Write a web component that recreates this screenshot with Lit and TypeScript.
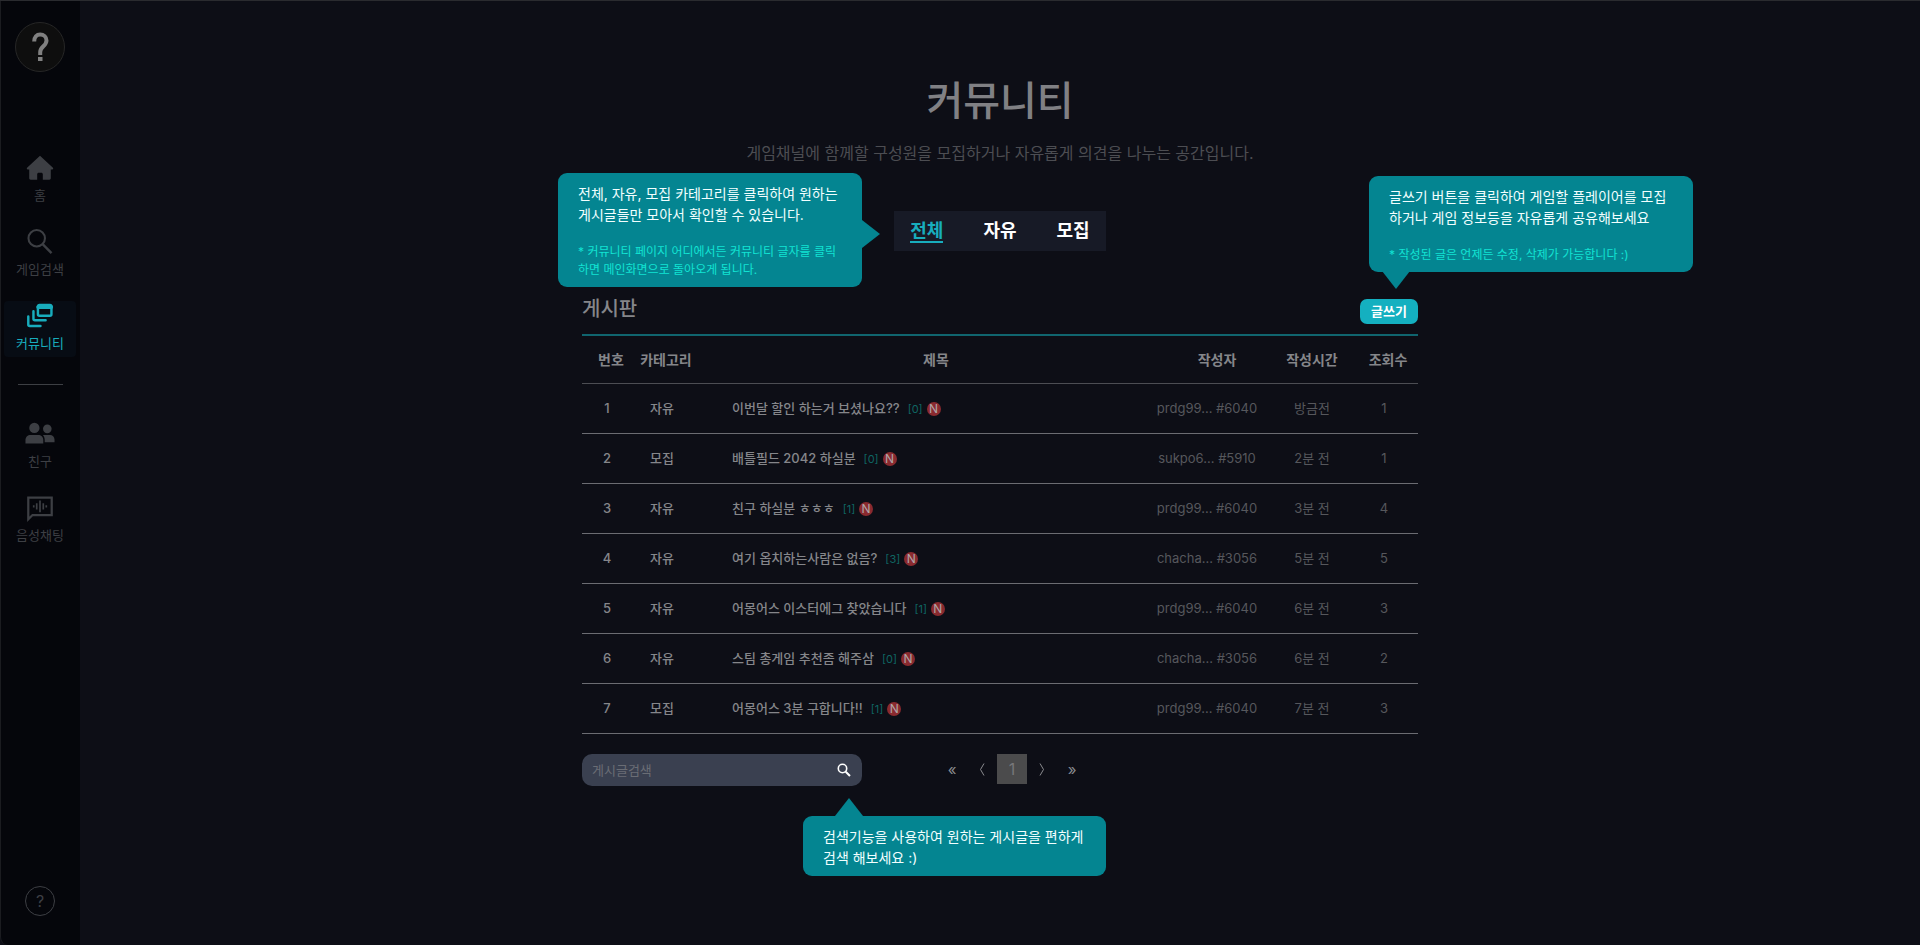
import { LitElement, html, css, svg } from "lit";
import { customElement, state } from "lit/decorators.js";

interface Post {
  no: number;
  category: string;
  title: string;
  replies: number;
  author: string;
  time: string;
  views: number;
}

const POSTS: Post[] = [
  { no: 1, category: "자유", title: "이번달 할인 하는거 보셨나요??", replies: 0, author: "prdg99... #6040", time: "방금전", views: 1 },
  { no: 2, category: "모집", title: "배틀필드 2042 하실분", replies: 0, author: "sukpo6... #5910", time: "2분 전", views: 1 },
  { no: 3, category: "자유", title: "친구 하실분 ㅎㅎㅎ", replies: 1, author: "prdg99... #6040", time: "3분 전", views: 4 },
  { no: 4, category: "자유", title: "여기 옵치하는사람은 없음?", replies: 3, author: "chacha... #3056", time: "5분 전", views: 5 },
  { no: 5, category: "자유", title: "어몽어스 이스터에그 찾았습니다", replies: 1, author: "prdg99... #6040", time: "6분 전", views: 3 },
  { no: 6, category: "자유", title: "스팀 총게임 추천좀 해주삼", replies: 0, author: "chacha... #3056", time: "6분 전", views: 2 },
  { no: 7, category: "모집", title: "어몽어스 3분 구합니다!!", replies: 1, author: "prdg99... #6040", time: "7분 전", views: 3 },
];

const ICONS = {
  home: svg`<path fill="currentColor" d="M16 3 29.800 15.800c.6.6.2 1.800-.7 1.800H27.500V27c0 .9-.6 1.500-1.500 1.500H19v-5.800c0-.9-.7-1.600-1.600-1.600h-2.800c-.9 0-1.600.7-1.600 1.600v5.800H6C5.100 28.500 4.500 27.900 4.500 27v-9.400H2.900c-.9 0-1.300-1.200-.7-1.800z"/>`,
  search: svg`<g fill="none" stroke="currentColor" stroke-width="2.200"><circle cx="12.500" cy="12" r="8.800"/><path d="M18.800 18.300 28.300 27.800" stroke-width="2.600"/></g>`,
  community: svg`<g fill="none" stroke="currentColor" stroke-width="2.600" stroke-linejoin="round" stroke-linecap="round"><rect x="13.800" y="4.300" width="14.400" height="11.400" rx="1.600"/><path d="M14 6.400h14" stroke-width="4"/><path d="M9 11v8c0 1 .6 1.600 1.600 1.600h11.400"/><path d="M3.500 16.500v8.500c0 1 .6 1.600 1.600 1.600h11.400"/></g>`,
  friends: svg`<g fill="currentColor"><circle cx="10" cy="9.500" r="5.500"/><path d="M.5 26v-3.500C.5 19 3.100 17 5.700 17h8.600c2.600 0 5.200 1.800 5.200 5.500V26z"/><circle cx="23.800" cy="10.500" r="4.600"/><path d="M21 24.800v-2.600c0-1.900-.7-3.700-1.900-5.200h7.700c2.400 0 4.700 1.700 4.700 5v2.800z"/></g>`,
  voice: svg`<g fill="none" stroke="currentColor" stroke-width="2"><path d="M3.500 28V5h25v18.500H8z" stroke-width="2.400"/><path d="M16 8v12.500M12.500 11v6.500M19.500 11v6.500M9.300 13v2.500M22.700 13v2.500" stroke-width="1.800"/></g>`,
};

@customElement("side-nav")
class SideNav extends LitElement {
  static styles = css`
    :host {
      display: flex;
      flex-direction: column;
      align-items: center;
      box-sizing: border-box;
      padding: 21px 4px 29px 3px;
      border-left: 1px solid #1b1c20;
      border-bottom-left-radius: 8px;
      background: #05060b;
    }
    .logo {
      box-sizing: border-box;
      width: 50px;
      height: 50px;
      border: 1px solid #262626;
      border-radius: 50%;
      background: #0e0e0e;
      color: #808080;
    }
    .logo svg {
      display: block;
      width: 48px;
      height: 48px;
    }
    nav {
      display: flex;
      flex-direction: column;
      align-items: center;
      gap: 18px;
      align-self: stretch;
      margin-top: 81px;
    }
    .item {
      display: flex;
      flex-direction: column;
      align-items: center;
      box-sizing: border-box;
      align-self: stretch;
      height: 56px;
      color: #3d3f44;
      font-size: 13px;
      line-height: 20px;
      text-decoration: none;
      border-radius: 4px;
    }
    .item svg {
      width: 30px;
      height: 30px;
      margin-bottom: 2px;
    }
    .active {
      background: #070c14;
      color: #18adbd;
    }
    .line {
      width: 45px;
      height: 1px;
      margin: 9px 0 16px;
      border: 0;
      background: #3d3f44;
    }
    .help {
      width: 30px;
      height: 30px;
      margin-top: auto;
      padding: 0;
      border: 1px solid #3d3f44;
      border-radius: 50%;
      background: none;
      color: #3d3f44;
      font: inherit;
      font-size: 16px;
    }
  `;

  private item(icon: unknown, label: string, active = false) {
    return html`<a class="item ${active ? "active" : ""}" href="#">
      <svg viewBox="0 0 32 32" aria-hidden="true">${icon}</svg>${label}
    </a>`;
  }

  render() {
    return html`
      <div class="logo">
        <svg viewBox="0 0 48 48" aria-hidden="true">
          <path d="M18.200 18.500c0-4.500 2.500-7 6-7s6.300 2.500 6.300 6c0 5.500-6.300 6-6.300 11.500v3" fill="none" stroke="currentColor" stroke-width="4" />
          <rect x="22" y="34" width="4.500" height="4" fill="currentColor" />
        </svg>
      </div>
      <nav>
        ${this.item(ICONS.home, "홈")} ${this.item(ICONS.search, "게임검색")}
        ${this.item(ICONS.community, "커뮤니티", true)}
        <hr class="line" />
        ${this.item(ICONS.friends, "친구")} ${this.item(ICONS.voice, "음성채팅")}
      </nav>
      <button class="help" aria-label="도움말">?</button>
    `;
  }
}

@customElement("guide-bubble")
class GuideBubble extends LitElement {
  static styles = css`
    :host {
      position: absolute;
      box-sizing: border-box;
      padding: 10px 0 8px 20px;
      border-radius: 9px;
      background: #048591;
      color: #f2ffff;
      font-size: 14px;
      line-height: 21px;
      white-space: nowrap;
    }
    ::slotted(p) {
      margin: 0;
    }
    ::slotted(.note) {
      margin-top: 18px !important;
      color: #12e3d3;
      font-size: 12px;
      line-height: 18px;
    }
  `;

  render() {
    return html`<slot></slot>`;
  }
}

@customElement("app-root")
class AppRoot extends LitElement {
  @state() private category = "전체";

  static styles = css`
    :host {
      display: grid;
      grid-template-columns: 80px 1fr;
      box-sizing: border-box;
      min-height: 100vh;
      border-top: 1px solid #2a2b2f;
      overflow: hidden;
      background: #0d0e16;
      color: #85868a;
      font-family: Inter, "Noto Sans CJK KR", sans-serif;
      font-size: 13px;
    }
    main {
      width: 836px;
      max-width: 100%;
      margin: 0 auto;
      padding-top: 70px;
    }
    .intro {
      text-align: center;
    }
    h1 {
      margin: 0;
      color: #808084;
      font-size: 40px;
      font-weight: 500;
      line-height: 60px;
    }
    .intro p {
      margin: 10px 0 0;
      color: #4c4d52;
      font-size: 16px;
      line-height: 24px;
    }
    .anchor {
      position: relative;
    }
    .tabs {
      display: flex;
      gap: 40px;
      width: max-content;
      margin: 46px auto 0;
      padding: 0 16px;
      background: #171a26;
    }
    .tab {
      height: 40px;
      padding: 0;
      border: 0;
      background: none;
      color: #ffffff;
      font: inherit;
      font-size: 18px;
      font-weight: 700;
      line-height: 20px;
    }
    .tab span {
      display: block;
      padding-top: 2px;
      border-bottom: 2px solid transparent;
    }
    .tab.on span {
      border-color: #18adbd;
      color: #18adbd;
    }
    .bar {
      display: flex;
      justify-content: space-between;
      align-items: center;
      margin-top: 43px;
      padding-bottom: 6px;
      border-bottom: 2px solid #10656f;
    }
    h2 {
      margin: 0;
      padding-bottom: 4px;
      font-size: 20px;
      font-weight: 500;
      line-height: 30px;
    }
    .write {
      height: 25px;
      padding: 0 11px;
      border: 0;
      border-radius: 7px;
      background: #14b0c0;
      color: #ffffff;
      font: inherit;
      font-weight: 700;
      line-height: 22px;
    }
    table {
      width: 100%;
      border-collapse: separate;
      border-spacing: 0;
      table-layout: fixed;
    }
    th,
    td {
      box-sizing: border-box;
      height: 50px;
      padding: 0 0 2px;
      border-bottom: 1px solid #6b6c72;
      text-align: center;
    }
    th {
      height: 48px;
      border-color: #4c4d53;
      font-size: 14px;
      font-weight: 700;
    }
    .c-no { width: 50px; }
    .c-cat { width: 60px; }
    .c-author { width: 134px; }
    .c-time { width: 76px; }
    .c-views { width: 68px; }
    .shift { padding-left: 8px; }
    .shift-wide { padding-left: 20px; }
    .num,
    .cat {
      font-weight: 500;
    }
    .subject {
      padding-left: 40px;
    }
    td.subject {
      text-align: left;
      font-weight: 500;
    }
    .post {
      display: flex;
      align-items: center;
    }
    .post a {
      color: inherit;
      text-decoration: none;
    }
    .replies {
      margin: 2px 4px 0 8px;
      color: #0f6562;
      font-size: 11px;
      font-weight: 400;
    }
    .new {
      width: 14px;
      height: 14px;
      margin-top: 2px;
      border-radius: 50%;
      background: #8a2a2f;
      color: #b0a6a8;
      font-size: 12px;
      font-weight: 400;
      line-height: 14px;
      text-align: center;
    }
    .dim {
      color: #56575c;
    }
    .foot {
      display: flex;
      gap: 75px;
      margin-top: 20px;
    }
    .search {
      display: flex;
      align-items: center;
      box-sizing: border-box;
      width: 280px;
      height: 32px;
      padding: 0 10px;
      border-radius: 10px;
      background: #3a4050;
    }
    .search input {
      flex: 1;
      min-width: 0;
      padding: 0;
      border: 0;
      outline: 0;
      background: none;
      color: #ffffff;
      font: inherit;
    }
    .search input::placeholder {
      color: #6a6d75;
      opacity: 1;
    }
    .go {
      display: flex;
      padding: 0;
      border: 0;
      background: none;
      color: #ffffff;
    }
    .go svg {
      width: 16px;
      height: 16px;
    }
    .pages {
      display: flex;
    }
    .page {
      width: 30px;
      height: 30px;
      padding: 0;
      border: 0;
      background: none;
      color: #8a8b8f;
      font: inherit;
      font-size: 15px;
    }
    .page svg {
      display: block;
      width: 30px;
      height: 30px;
      fill: none;
      stroke: currentColor;
    }
    .page.on {
      background: #4b4b4c;
      color: #77777a;
      font-size: 16px;
    }
    .tip {
      position: absolute;
      background: #048591;
    }
    .b-tabs { right: 556px; top: -38px; width: 304px; }
    .t-tabs {
      right: 538px;
      top: 9px;
      width: 18px;
      height: 28px;
      clip-path: polygon(0 0, 100% 50%, 0 100%);
    }
    .b-write { left: 787px; bottom: 62px; width: 324px; }
    .t-write {
      left: 800px;
      bottom: 45px;
      width: 28px;
      height: 18px;
      clip-path: polygon(0 0, 100% 0, 50% 100%);
    }
    .b-search { left: 221px; top: 62px; width: 303px; }
    .t-search {
      left: 253px;
      top: 44px;
      width: 28px;
      height: 18px;
      clip-path: polygon(50% 0, 100% 100%, 0 100%);
    }
  `;

  private row(p: Post) {
    return html`<tr>
      <td class="num">${p.no}</td>
      <td class="cat">${p.category}</td>
      <td class="subject">
        <div class="post">
          <a href="#">${p.title}</a>
          <span class="replies">[${p.replies}]</span>
          <span class="new">N</span>
        </div>
      </td>
      <td class="dim">${p.author}</td>
      <td class="dim">${p.time}</td>
      <td class="dim">${p.views}</td>
    </tr>`;
  }

  render() {
    return html`
      <side-nav></side-nav>
      <main>
        <header class="intro">
          <h1>커뮤니티</h1>
          <p>게임채널에 함께할 구성원을 모집하거나 자유롭게 의견을 나누는 공간입니다.</p>
        </header>

        <div class="anchor">
          <div class="tabs">
            ${["전체", "자유", "모집"].map(
              (c) => html`<button class="tab ${c === this.category ? "on" : ""}" @click=${() => (this.category = c)}>
                <span>${c}</span>
              </button>`,
            )}
          </div>
          <guide-bubble class="b-tabs">
            <p>전체, 자유, 모집 카테고리를 클릭하여 원하는<br />게시글들만 모아서 확인할 수 있습니다.</p>
            <p class="note">* 커뮤니티 페이지 어디에서든 커뮤니티 글자를 클릭<br />하면 메인화면으로 돌아오게 됩니다.</p>
          </guide-bubble>
          <div class="tip t-tabs"></div>
        </div>

        <div class="anchor bar">
          <h2>게시판</h2>
          <button class="write">글쓰기</button>
          <guide-bubble class="b-write">
            <p>글쓰기 버튼을 클릭하여 게임할 플레이어를 모집<br />하거나 게임 정보등을 자유롭게 공유해보세요</p>
            <p class="note">* 작성된 글은 언제든 수정, 삭제가 가능합니다 :)</p>
          </guide-bubble>
          <div class="tip t-write"></div>
        </div>

        <table>
          <colgroup>
            <col class="c-no" />
            <col class="c-cat" />
            <col />
            <col class="c-author" />
            <col class="c-time" />
            <col class="c-views" />
          </colgroup>
          <thead>
            <tr>
              <th class="shift">번호</th>
              <th class="shift">카테고리</th>
              <th class="subject">제목</th>
              <th class="shift-wide">작성자</th>
              <th>작성시간</th>
              <th class="shift">조회수</th>
            </tr>
          </thead>
          <tbody>
            ${POSTS.map((p) => this.row(p))}
          </tbody>
        </table>

        <div class="anchor foot">
          <form class="search" @submit=${(e: Event) => e.preventDefault()}>
            <input type="text" placeholder="게시글검색" aria-label="게시글검색" />
            <button class="go" aria-label="검색">
              <svg viewBox="0 0 16 16" fill="none" stroke="currentColor" stroke-width="1.600">
                <circle cx="6.500" cy="6.500" r="4.200" />
                <path d="M9.700 9.700 14 14" stroke-width="2" />
              </svg>
            </button>
          </form>
          <div class="pages">
            <button class="page">«</button>
            <button class="page" aria-label="이전"><svg viewBox="0 0 30 30"><path d="M17 9.500 13.500 15.500 17 21.500" /></svg></button>
            <button class="page on">1</button>
            <button class="page" aria-label="다음"><svg viewBox="0 0 30 30"><path d="M13 9.500 16.500 15.500 13 21.500" /></svg></button>
            <button class="page">»</button>
          </div>
          <guide-bubble class="b-search">
            <p>검색기능을 사용하여 원하는 게시글을 편하게<br />검색 해보세요 :)</p>
          </guide-bubble>
          <div class="tip t-search"></div>
        </div>
      </main>
    `;
  }
}
